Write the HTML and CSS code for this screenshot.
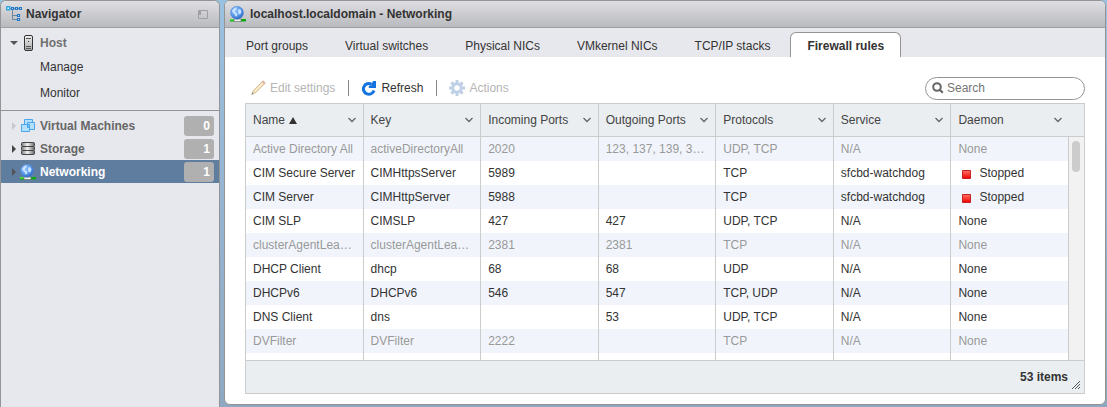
FILE: index.html
```html
<!DOCTYPE html>
<html lang="en">
<head>
<meta charset="utf-8">
<title>localhost.localdomain - Networking</title>
<link rel="stylesheet" href="styles.css">
</head>
<body>
<svg class="defs" aria-hidden="true">
  <defs>
    <linearGradient id="metal" x1="0" x2="1" y1="0" y2="0">
      <stop offset="0" stop-color="#777"/><stop offset=".45" stop-color="#f6f6f6"/><stop offset="1" stop-color="#666"/>
    </linearGradient>
    <linearGradient id="server" x1="0" x2="0" y1="0" y2="1">
      <stop offset="0" stop-color="#f0f0f0"/><stop offset="1" stop-color="#aaa"/>
    </linearGradient>
    <radialGradient id="ocean" cx=".4" cy=".35" r=".65">
      <stop offset="0" stop-color="#86bcfa"/><stop offset=".6" stop-color="#5c9cec"/><stop offset="1" stop-color="#2c68c4"/>
    </radialGradient>
    <linearGradient id="stop-red" x1="0" x2="0" y1="0" y2="1">
      <stop offset="0" stop-color="#ff7468"/><stop offset="1" stop-color="#f00000"/>
    </linearGradient>
    <symbol id="globe" viewBox="0 0 16 16">
      <path d="M0 13h16v2.500H0z" fill="#0cab0c"/><path d="M0 13h4v1.500H0z" fill="#51e043"/>
      <path d="M4 13h7v2.500H4z" fill="#f2f2f2" stroke="#666" stroke-width=".6"/>
      <circle cx="7" cy="6.700" r="6.500" fill="url(#ocean)" stroke="#5a8fd6" stroke-width=".5"/>
      <path d="M2 4.500 4.500 1.800 7 1.500 6.500 3.500 4.800 5 5.500 6.500 7.500 7.500 7 10 5.500 10.500 4.500 8 2.500 6.500zM8.500 3 10.500 3.500 11.500 5.500 10.500 8 9 8.500 8 6z" fill="#d2e8ff" opacity=".9"/>
    </symbol>
    <symbol id="chevron" viewBox="0 0 8 6"><path d="M.5 1 4 4.500 7.500 1" fill="none" stroke="#666" stroke-width="1.300"/></symbol>
    <symbol id="stop" viewBox="0 0 9 9"><path d="M.5.5h8v8h-8z" fill="url(#stop-red)" stroke="#c52222"/></symbol>
  </defs>
</svg>
<div class="app">
  <aside class="panel navigator">
    <header class="panel-head">
      <svg class="icon" viewBox="0 0 16 16" fill="none">
        <path d="M4 2.500h12M6.500 3v10.500h5M6.500 9.500h5" stroke="#6f879f"/>
        <path d="M.7.700h3v3h-3z" fill="#d9f3ff" stroke="#37a9e0" stroke-width="1.400"/>
        <path d="M5.500 1.500h2v2h-2zM9.500 1.500h2v2h-2zM13.500 1.500h2v2h-2zM11.500 8.500h2v2h-2zM11.500 12.500h2v2h-2z" fill="#cfe4fa" stroke="#2878c8" stroke-width="1.200"/>
      </svg>
      <h2>Navigator</h2>
      <button class="collapse" aria-label="Minimize"><svg width="10" height="9" viewBox="0 0 10 9"><path d="M.5.5h9v8h-9z" fill="none" stroke="#a0a0a4"/><path d="M1 1h2v4H1z" fill="#a0a0a4"/></svg></button>
    </header>
    <nav>
      <div class="host-group">
        <a class="node host" href="#"><svg class="twist" viewBox="0 0 8 8"><path d="M0 2h8L4 6z" fill="#555"/></svg>
          <svg class="icon" viewBox="0 0 16 16"><rect x="4.500" y=".5" width="8" height="15" rx="1.500" fill="url(#server)" stroke="#333"/><path d="M6 3.500h5M6 11.500h5M6 13.500h5" stroke="#555"/><path d="M8 6h1v1H8z" fill="#333"/></svg>
          <span>Host</span></a>
        <a class="leaf" href="#">Manage</a>
        <a class="leaf" href="#">Monitor</a>
      </div>
      <a class="node" href="#"><svg class="twist" viewBox="0 0 8 8"><path d="M2 0v8l4-4z" fill="#c9c9cc"/></svg>
        <svg class="icon" viewBox="0 0 16 16" fill="#b4e0ff" stroke="#49a5ec"><path d="M4.500 1.500h8v8h-8z"/><path d="M7.500 4.500h7v7h-7z"/><path d="M1.500 6.500h8v7h-8z"/><path d="M7.500 6.500h2v3h-2z" fill="#6fbcf5"/></svg>
        <span>Virtual Machines</span><b class="count">0</b></a>
      <a class="node" href="#"><svg class="twist" viewBox="0 0 8 8"><path d="M2 0v8l4-4z" fill="#444"/></svg>
        <svg class="icon" viewBox="0 0 16 16" fill="url(#metal)" stroke="#444"><rect x="1.500" y="1.500" width="13" height="4" rx="1"/><rect x="1.500" y="5.500" width="13" height="4" rx="1"/><rect x="1.500" y="9.500" width="13" height="4" rx="1"/></svg>
        <span>Storage</span><b class="count">1</b></a>
      <a class="node selected" href="#" aria-current="page"><svg class="twist" viewBox="0 0 8 8"><path d="M2 0v8l4-4z" fill="#555"/></svg>
        <svg class="icon"><use href="#globe"/></svg>
        <span>Networking</span><b class="count">1</b></a>
    </nav>
  </aside>

  <main class="panel content">
    <header class="panel-head">
      <svg class="icon"><use href="#globe"/></svg>
      <h1>localhost.localdomain - Networking</h1>
    </header>
    <div class="tabs" role="tablist">
      <button role="tab">Port groups</button>
      <button role="tab">Virtual switches</button>
      <button role="tab">Physical NICs</button>
      <button role="tab">VMkernel NICs</button>
      <button role="tab">TCP/IP stacks</button>
      <button role="tab" aria-selected="true" class="active">Firewall rules</button>
    </div>
    <section class="view">
      <div class="toolbar">
        <button disabled><svg class="icon" viewBox="0 0 16 16"><path d="M2 14 3.200 10.700 12.200 1.700l2.200 2.200L5.400 12.900z" fill="#f4dfb8" stroke="#c9b083" stroke-width=".8"/><path d="M12.200 1.700 13.200.8l2.100 2.100-.9 1z" fill="#f0b7b0" stroke="#cf9d99" stroke-width=".6"/><path d="M4.500 11.500 13 3" stroke="#fff6df"/><path d="M1.300 14.800 2.200 12.500l1.400 1.400z" fill="#888"/></svg>Edit settings</button>
        <button class="enabled"><svg class="icon" viewBox="0 0 16 16"><path d="M13 10.500A5.400 5.400 0 1 1 10.500 4.200" fill="none" stroke="#1474df" stroke-width="3"/><path d="M12 1h3v7H7.800V5.500H10z" fill="#1474df"/></svg>Refresh</button>
        <button disabled><svg class="icon" viewBox="0 0 16 16"><g stroke="#bfd1e6" stroke-width="3"><path d="M8 0v16M0 8h16M2.400 2.400l11.200 11.200M13.600 2.400 2.400 13.600"/></g><circle cx="8" cy="8" r="5.800" fill="#bfd1e6"/><circle cx="8" cy="8" r="2.700" fill="#fff"/></svg>Actions</button>
        <label class="search"><svg width="12" height="12" viewBox="0 0 12 12"><circle cx="5" cy="5" r="3.800" fill="none" stroke="#666" stroke-width="2"/><path d="m7.800 7.800 3 3" stroke="#666" stroke-width="2.200"/></svg><input type="search" placeholder="Search" aria-label="Search"></label>
      </div>
      <div class="grid">
        <table>
          <colgroup><col><col><col><col><col><col><col><col class="scroll-col"></colgroup>
          <thead><tr>
            <th><div>Name <svg class="sort" viewBox="0 0 8 7"><path d="M4 0 8 7H0z"/></svg><svg class="chevron"><use href="#chevron"/></svg></div></th>
            <th><div>Key<svg class="chevron"><use href="#chevron"/></svg></div></th>
            <th><div>Incoming Ports<svg class="chevron"><use href="#chevron"/></svg></div></th>
            <th><div>Outgoing Ports<svg class="chevron"><use href="#chevron"/></svg></div></th>
            <th><div>Protocols<svg class="chevron"><use href="#chevron"/></svg></div></th>
            <th><div>Service<svg class="chevron"><use href="#chevron"/></svg></div></th>
            <th class="last"><div>Daemon<svg class="chevron"><use href="#chevron"/></svg></div></th>
            <th class="last"></th>
          </tr></thead>
          <tbody>
            <tr class="off"><td>Active Directory All</td><td>activeDirectoryAll</td><td>2020</td><td>123, 137, 139, 3…</td><td>UDP, TCP</td><td>N/A</td><td>None</td><td class="track" rowspan="10"><div class="thumb"></div></td></tr>
            <tr><td>CIM Secure Server</td><td>CIMHttpsServer</td><td>5989</td><td></td><td>TCP</td><td>sfcbd-watchdog</td><td><svg class="stop"><use href="#stop"/></svg>Stopped</td></tr>
            <tr><td>CIM Server</td><td>CIMHttpServer</td><td>5988</td><td></td><td>TCP</td><td>sfcbd-watchdog</td><td><svg class="stop"><use href="#stop"/></svg>Stopped</td></tr>
            <tr><td>CIM SLP</td><td>CIMSLP</td><td>427</td><td>427</td><td>UDP, TCP</td><td>N/A</td><td>None</td></tr>
            <tr class="off"><td>clusterAgentLea…</td><td>clusterAgentLea…</td><td>2381</td><td>2381</td><td>TCP</td><td>N/A</td><td>None</td></tr>
            <tr><td>DHCP Client</td><td>dhcp</td><td>68</td><td>68</td><td>UDP</td><td>N/A</td><td>None</td></tr>
            <tr><td>DHCPv6</td><td>DHCPv6</td><td>546</td><td>547</td><td>TCP, UDP</td><td>N/A</td><td>None</td></tr>
            <tr><td>DNS Client</td><td>dns</td><td></td><td>53</td><td>UDP, TCP</td><td>N/A</td><td>None</td></tr>
            <tr class="off"><td>DVFilter</td><td>DVFilter</td><td>2222</td><td></td><td>TCP</td><td>N/A</td><td>None</td></tr>
            <tr class="partial"><td></td><td></td><td></td><td></td><td></td><td></td><td></td></tr>
          </tbody>
        </table>
        <footer><span>53 items</span><svg width="8" height="8" viewBox="0 0 8 8"><path d="M0 8 8 0M3 8l5-5M6 8l2-2" stroke="#555"/></svg></footer>
      </div>
    </section>
  </main>
</div>
</body>
</html>
```
FILE: styles.css
```css
* { box-sizing: border-box; }
body {
  margin: 0;
  font: 12px/16px "Liberation Sans", Arial, sans-serif;
  color: #333;
  background: linear-gradient(#9bc1e1, #8fa8c2);
}
button, input { font: inherit; color: inherit; }
button { border: 0; background: none; padding: 0; }
a { color: inherit; text-decoration: none; }
.defs { position: absolute; width: 0; height: 0; }
.app { display: flex; gap: 4px; min-height: 100vh; padding-right: 1px; }
.icon { width: 16px; height: 16px; flex: none; }

.panel { border: 1px solid #949494; border-radius: 6px 6px 0 0; overflow: hidden; background: #e7e8ed; }
.navigator { flex: 0 0 220px; border-bottom: 0; }
.content { flex: 1; min-width: 0; margin-bottom: 2px; border-radius: 6px; background: #fff; display: flex; flex-direction: column; }
.panel-head {
  display: flex; align-items: center; gap: 4px;
  height: 27px; padding: 0 11px 0 5px;
  background: linear-gradient(#dfdfe3, #b9babe);
  border-bottom: 1px solid #a0a0a0;
}
.panel-head h1, .panel-head h2 { margin: 0; font-size: 12px; line-height: 16px; }
.collapse { margin-left: auto; display: flex; }

.host-group { padding: 4px 0; margin-bottom: 3px; border-bottom: 1px solid #949494; }
.node {
  display: flex; align-items: center;
  height: 23px; padding: 0 5px 0 9px;
  color: #666; font-weight: bold;
}
.twist { width: 8px; height: 8px; margin-right: 2px; }
.node .icon { margin-right: 4px; }
.leaf { display: block; padding: 5px 0 5px 39px; }
.host { height: 22px; color: #707070; }
.count {
  margin-left: auto; width: 30px; height: 20px; padding-right: 4px;
  border-radius: 3px; background: #b0b0b0; color: #fff;
  text-align: right; line-height: 20px;
}
.selected { background: #5f7d9f; color: #fff; }

.tabs { display: flex; gap: 3px; padding: 4px 0 0 4px; background: #e7e8ed; }
.tabs button { height: 25px; padding: 2px 16px 0; border: 1px solid transparent; border-bottom: 0; border-radius: 6px 6px 0 0; }
.tabs .active { border-color: #949494; background: #fff; font-weight: bold; }

.view { flex: 1; padding: 20px 20px 10px; display: flex; flex-direction: column; }
.toolbar { display: flex; align-items: center; height: 22px; margin-bottom: 4px; padding-left: 5px; }
.toolbar button { display: flex; align-items: center; gap: 4px; color: #b5b5b5; }
.toolbar button + button { border-left: 1px solid #888; margin-left: 13px; padding-left: 12px; }
.toolbar .enabled { color: #333; }
.search {
  display: flex; align-items: center; gap: 3px;
  width: 160px; height: 23px; margin-left: auto; padding: 0 8px 0 6px;
  border: 1px solid #949494; border-radius: 12px;
}
.search input { flex: 1; min-width: 0; padding: 0; border: 0; outline: 0; background: none; }
.search input::placeholder { color: #757575; }

.grid { border: 1px solid #ccc; }
table { width: 100%; table-layout: fixed; border-collapse: separate; border-spacing: 0; }
.scroll-col { width: 15px; }
th, td { padding: 0 7px; text-align: left; white-space: nowrap; overflow: hidden; border-right: 1px solid #ccc; }
td { height: 24px; text-overflow: ellipsis; }
th { height: 33px; background: #eaeef1; border-bottom: 1px solid #ccc; color: #444; font-weight: normal; }
th div { display: flex; align-items: center; gap: 4px; }
th.last { border-right: 0; }
tbody tr:nth-child(odd) { background: #f1f5fb; }
tbody tr:nth-child(even) { background: #fff; }
.off { color: #999; }
.partial td { height: 7px; }
.sort { width: 8px; height: 7px; fill: #333; }
.chevron { width: 8px; height: 6px; margin-left: auto; }
.stop { width: 9px; height: 9px; margin: 0 8px 0 4px; vertical-align: -2px; }
.track { padding: 4px 3px; vertical-align: top; background: #f2f2f2; border-right: 0; }
.thumb { width: 8px; height: 31px; border-radius: 4px; background: #ccc; }
footer { display: flex; align-items: center; height: 33px; padding: 0 4px 0 0; border-top: 1px solid #ccc; background: #eaeef1; font-weight: bold; }
footer span { margin-left: auto; }
footer svg { margin: 16px 0 0 4px; }
```
